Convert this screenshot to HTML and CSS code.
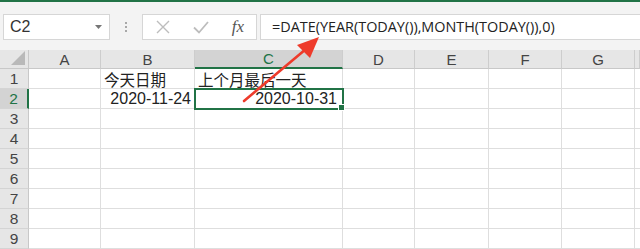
FILE: index.html
```html
<!DOCTYPE html>
<html lang="zh-CN">
<head>
  <meta charset="UTF-8">
  <title>Excel - 上个月最后一天</title>
  <link rel="stylesheet" href="styles.css">
</head>
<body>
  <div class="app">
    <div class="topbar"></div>

    <div class="formula-row">
      <div class="namebox">
        <span>C2</span>
        <svg class="caret" width="7" height="4" viewBox="0 0 7 4"><path d="M0 0h7L3.5 4z" fill="#767676"/></svg>
      </div>
      <div class="grip">
        <i></i><i></i><i></i>
      </div>
      <div class="fbuttons">
        <svg width="14" height="14" viewBox="0 0 14 14"><path d="M1 1L13 13M13 1L1 13" stroke="#bdbdbd" stroke-width="1.4" fill="none"/></svg>
        <svg width="16" height="14" viewBox="0 0 16 14"><path d="M1 7.5L6 12.5L15 2" stroke="#bdbdbd" stroke-width="1.8" fill="none"/></svg>
        <span class="fx">fx</span>
      </div>
      <div class="fbox">=DATE(YEAR(TODAY()),MONTH(TODAY()),0)</div>
    </div>

    <div class="sheet">
      <div class="corner"><svg width="14" height="14" viewBox="0 0 14 14"><path d="M14 0V14H0z" fill="#b9b9b9"/></svg></div>
      <div class="ch">A</div>
      <div class="ch">B</div>
      <div class="ch active">C</div>
      <div class="ch">D</div>
      <div class="ch">E</div>
      <div class="ch">F</div>
      <div class="ch">G</div>
      <div class="ch"></div>

      <div class="rh">1</div>
      <div class="c"></div>
      <div class="c cjk">今天日期</div>
      <div class="c cjk">上个月最后一天</div>
      <div class="c"></div><div class="c"></div><div class="c"></div><div class="c"></div><div class="c"></div>

      <div class="rh active">2</div>
      <div class="c"></div>
      <div class="c num">2020-11-24</div>
      <div class="c num sel">2020-10-31</div>
      <div class="c"></div><div class="c"></div><div class="c"></div><div class="c"></div><div class="c"></div>

      <div class="rh">3</div>
      <div class="c"></div><div class="c"></div><div class="c"></div><div class="c"></div><div class="c"></div><div class="c"></div><div class="c"></div><div class="c"></div>
      <div class="rh">4</div>
      <div class="c"></div><div class="c"></div><div class="c"></div><div class="c"></div><div class="c"></div><div class="c"></div><div class="c"></div><div class="c"></div>
      <div class="rh">5</div>
      <div class="c"></div><div class="c"></div><div class="c"></div><div class="c"></div><div class="c"></div><div class="c"></div><div class="c"></div><div class="c"></div>
      <div class="rh">6</div>
      <div class="c"></div><div class="c"></div><div class="c"></div><div class="c"></div><div class="c"></div><div class="c"></div><div class="c"></div><div class="c"></div>
      <div class="rh">7</div>
      <div class="c"></div><div class="c"></div><div class="c"></div><div class="c"></div><div class="c"></div><div class="c"></div><div class="c"></div><div class="c"></div>
      <div class="rh">8</div>
      <div class="c"></div><div class="c"></div><div class="c"></div><div class="c"></div><div class="c"></div><div class="c"></div><div class="c"></div><div class="c"></div>
      <div class="rh">9</div>
      <div class="c"></div><div class="c"></div><div class="c"></div><div class="c"></div><div class="c"></div><div class="c"></div><div class="c"></div><div class="c"></div>
    </div>

    <!-- red annotation arrow over the sheet -->
    <svg class="arrow" width="640" height="249" viewBox="0 0 640 249">
      <path d="M244 101L306 49" stroke="#ee3b2b" stroke-width="2.6" stroke-linecap="round"/>
      <path d="M319 37L297 45L310 58z" fill="#ee3b2b"/>
    </svg>
  </div>
</body>
</html>
```

FILE: styles.css
```css
* {
  box-sizing: border-box;
}
body {
  margin: 0;
  font-family: "Liberation Sans", "Noto Sans CJK SC", sans-serif;
  color: #222;
  background-color: #ffffff;
}
.app {
  position: relative;
  width: 640px;
  height: 249px;
  overflow: hidden;
  background-color: #f3f3f3;
}
.topbar {
  height: 2px;
  background-color: #217346;
}
.formula-row {
  display: flex;
  align-items: center;
  height: 48px;
  padding: 11px 0 9px 3px;
}
.namebox {
  display: flex;
  align-items: center;
  justify-content: space-between;
  width: 107px;
  height: 26px;
  padding: 0 7px 0 6px;
  background-color: #fff;
  border: 1px solid #d6d6d6;
  font-size: 16px;
  color: #333;
}
.grip {
  display: flex;
  flex-direction: column;
  gap: 2px;
  width: 32px;
  align-items: center;
}
.grip i {
  width: 2px;
  height: 2px;
  background-color: #a8a8a8;
}
.fbuttons {
  display: flex;
  align-items: center;
  justify-content: space-between;
  width: 115px;
  height: 26px;
  padding: 0 12px 0 13px;
  background-color: #fff;
  border: 1px solid #d6d6d6;
}
.fx {
  font-family: "Liberation Serif", serif;
  font-style: italic;
  font-size: 17px;
  color: #555;
}
.fbox {
  flex: 1;
  height: 26px;
  margin-left: 3px;
  padding: 2px 0 0 11px;
  background-color: #fff;
  border: 1px solid #d6d6d6;
  border-right: none;
  font-family: "Open Sans", sans-serif;
  font-size: 14.4px;
  color: #222;
  white-space: nowrap;
}
.sheet {
  display: grid;
  grid-template-columns: 29px 72px 94px 148px 72px 74px 73px 73px 5px;
  grid-template-rows: 19px repeat(9, 20px);
  background-color: #fff;
}
.corner {
  display: flex;
  align-items: flex-end;
  justify-content: flex-end;
  padding: 0 3px 3px 0;
  background-color: #e6e6e6;
  border-right: 1px solid #c8c8c8;
  border-bottom: 1px solid #c8c8c8;
}
.ch {
  display: flex;
  align-items: center;
  justify-content: center;
  background-color: #e6e6e6;
  border-right: 1px solid #cdcdcd;
  border-bottom: 1px solid #c8c8c8;
  font-size: 15px;
  color: #444;
}
.ch.active {
  background-color: #d3d3d3;
  border-bottom: 2px solid #217346;
  color: #217346;
}
.rh {
  display: flex;
  align-items: center;
  justify-content: center;
  background-color: #e6e6e6;
  border-right: 1px solid #c8c8c8;
  border-bottom: 1px solid #d4d4d4;
  font-size: 15.5px;
  color: #444;
}
.rh.active {
  background-color: #d3d3d3;
  border-right: 2px solid #217346;
  color: #217346;
}
.c {
  position: relative;
  display: flex;
  align-items: center;
  padding: 0 3px;
  border-right: 1px solid #dedede;
  border-bottom: 1px solid #dedede;
  font-size: 16px;
  white-space: nowrap;
}
.cjk {
  font-size: 15.5px;
  overflow: visible;
}
.num {
  justify-content: flex-end;
}
.sel {
  outline: 2px solid #217346;
  outline-offset: -1px;
  padding-right: 5px;
  z-index: 1;
}
.sel::after {
  content: "";
  position: absolute;
  right: -3px;
  bottom: -3px;
  width: 5px;
  height: 5px;
  background-color: #217346;
  border: 1px solid #fff;
}
.arrow {
  position: absolute;
  left: 0;
  top: 0;
  z-index: 2;
  pointer-events: none;
}
```
